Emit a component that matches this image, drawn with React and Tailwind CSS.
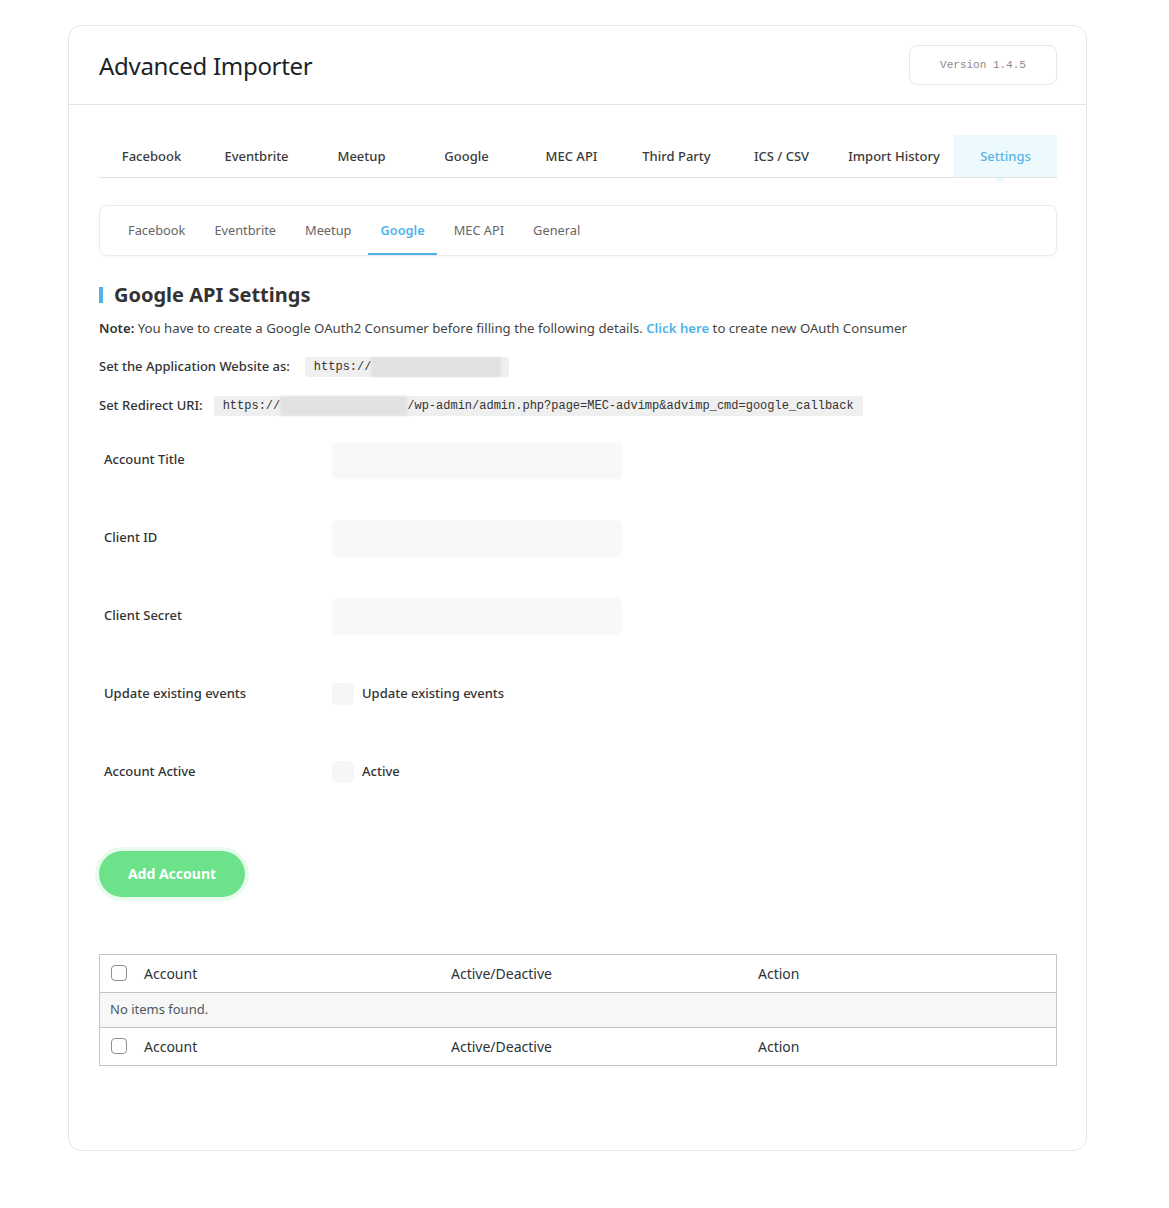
import { useState } from 'react';

const mainTabs = [
  { label: 'Facebook', w: 'w-[105px]' },
  { label: 'Eventbrite', w: 'w-[105px]' },
  { label: 'Meetup', w: 'w-[105px]' },
  { label: 'Google', w: 'w-[105px]' },
  { label: 'MEC API', w: 'w-[105px]' },
  { label: 'Third Party', w: 'w-[105px]' },
  { label: 'ICS / CSV', w: 'w-[105px]' },
  { label: 'Import History', w: 'w-[120px]' },
];

const subTabs = ['Facebook', 'Eventbrite', 'Meetup', 'Google', 'MEC API', 'General'];

const fields = ['Account Title', 'Client ID', 'Client Secret'];

const TableRow = () => (
  <div className="grid grid-cols-[35px_307px_307px_1fr] items-center h-[37px] text-[14px] text-[#2c3338]">
    <div className="flex pl-[11px]">
      <span className="block w-4 h-4 rounded-[4px] border border-[#8c8f94] bg-white" />
    </div>
    <div className="pl-[9px]">Account</div>
    <div className="pl-[9px]">Active/Deactive</div>
    <div className="pl-[9px]">Action</div>
  </div>
);

const App = () => {
  const [subTab, setSubTab] = useState('Google');
  const [update, setUpdate] = useState(false);
  const [active, setActive] = useState(false);

  return (
    <div className="min-h-[1208px] bg-white pt-[25px] px-[68px] font-['Noto_Sans','Open_Sans',sans-serif] text-[#333]">
      <div className="w-[1019px] border border-[#e6e6e6] rounded-[14px] bg-white pb-[84px]">
        {/* Header */}
        <div className="flex items-center justify-between h-[79px] pl-[30px] pr-[29px] border-b border-[#e3e3e3]">
          <h1 className="text-[24px] text-[#1d2327] font-normal leading-none tracking-[-0.3px] pt-[2px]">Advanced Importer</h1>
          <div className="flex items-center justify-center w-[148px] h-[40px] border border-[#e8e8e8] rounded-[8px] font-['Liberation_Mono',monospace] text-[11px] text-[#8a8a8a]">
            Version 1.4.5
          </div>
        </div>

        <div className="pl-[30px] pr-[29px] pt-[30px]">
          {/* Main tabs */}
          <div className="flex border-b border-[#e4e4e4] h-[43px]">
            {mainTabs.map((t) => (
              <div key={t.label} className={`${t.w} flex items-center justify-center pt-[2px] text-[13px] font-medium text-[#3b3b3b]`}>
                {t.label}
              </div>
            ))}
            <div className="relative w-[103px] flex items-center justify-center pt-[2px] bg-[#ecf9fd] text-[13px] font-medium text-[#58b5e4]">
              Settings
              <span className="absolute left-[40px] -bottom-[7px] w-0 h-0 border-l-[6px] border-r-[6px] border-t-[6px] border-l-transparent border-r-transparent border-t-[#ecf9fd]" />
            </div>
          </div>

          {/* Sub tabs */}
          <div className="mt-[27px] flex items-stretch gap-[5px] h-[51px] pl-[16px] border border-[#ebebeb] rounded-[8px] shadow-[0_1px_3px_rgba(0,0,0,0.04)]">
            {subTabs.map((t) => (
              <button
                key={t}
                onClick={() => setSubTab(t)}
                className={
                  t === subTab
                    ? 'px-3 text-[12.8px] font-semibold text-[#4fb3e8] border-b-2 border-[#4fb3e8] pt-[2px]'
                    : 'px-3 text-[12.8px] text-[#666] border-b-2 border-transparent pt-[2px]'
                }
              >
                {t}
              </button>
            ))}
          </div>

          {/* Heading */}
          <h2 className="mt-[26px] flex items-center gap-[11px] text-[20px] font-bold text-[#333] leading-[26px]">
            <span className="block w-[4px] h-[16px] bg-[#4fb3e8]" />
            Google API Settings
          </h2>

          <p className="mt-[11px] text-[13.2px] text-[#444]">
            <span className="font-semibold text-[#333]">Note:</span> You have to create a Google OAuth2 Consumer before filling the following details.{' '}
            <span className="font-semibold text-[#4fb3e8]">Click here</span> to create new OAuth Consumer
          </p>

          <div className="mt-[18px] flex items-center gap-[15px] text-[13px] font-medium text-[#333]">
            <span>Set the Application Website as:</span>
            <span className="flex items-center h-[20px] bg-[#efefef] rounded-[3px] pl-[9px] pr-[8px] font-['Liberation_Mono',monospace] text-[12px] font-normal text-[#333]">
              https://
              <span className="block w-[130px] h-[20px] bg-[#e2e2e2] blur-[1px]" />
            </span>
          </div>

          <div className="mt-[19px] flex items-center gap-[11px] text-[13px] font-medium text-[#333]">
            <span>Set Redirect URI:</span>
            <span className="flex items-center h-[20px] bg-[#efefef] pl-[9px] pr-[9px] font-['Liberation_Mono',monospace] text-[12px] font-normal text-[#333]">
              https://
              <span className="block w-[127px] h-[20px] bg-[#e2e2e2] blur-[1px]" />
              /wp-admin/admin.php?page=MEC-advimp&amp;advimp_cmd=google_callback
            </span>
          </div>

          {/* Form */}
          <div className="mt-[26px] pl-[5px] flex flex-col gap-[42px]">
            {fields.map((f) => (
              <div key={f} className="flex items-center h-[36px]">
                <label className="w-[228px] text-[13px] font-medium text-[#333]">{f}</label>
                <input
                  type="text"
                  className="w-[290px] h-[36px] rounded-[5px] bg-[#f7f8f9] outline-none shadow-[0_1px_2px_rgba(0,0,0,0.03)]"
                />
              </div>
            ))}
            <div className="flex items-center h-[36px]">
              <label className="w-[228px] text-[13px] font-medium text-[#333]">Update existing events</label>
              <button onClick={() => setUpdate(!update)} className="flex items-center gap-[8px] text-[13px] font-medium text-[#333]">
                <span className={`block w-[22px] h-[22px] rounded-[5px] ${update ? 'bg-[#4fb3e8]' : 'bg-[#f5f6f7]'}`} />
                Update existing events
              </button>
            </div>
            <div className="flex items-center h-[36px]">
              <label className="w-[228px] text-[13px] font-medium text-[#333]">Account Active</label>
              <button onClick={() => setActive(!active)} className="flex items-center gap-[8px] text-[13px] font-medium text-[#333]">
                <span className={`block w-[22px] h-[22px] rounded-[5px] ${active ? 'bg-[#4fb3e8]' : 'bg-[#f5f6f7]'}`} />
                Active
              </button>
            </div>
          </div>

          <button className="mt-[61px] w-[146px] h-[46px] rounded-full bg-[#6ce38a] text-white text-[14px] font-bold shadow-[0_0_0_4px_rgba(108,227,138,0.15)]">
            Add Account
          </button>

          {/* Table */}
          <div className="mt-[57px] border border-[#c3c4c7]">
            <TableRow />
            <div className="h-[36px] flex items-center pl-[10px] bg-[#f6f7f7] border-y border-[#c3c4c7] text-[13px] text-[#50575e]">
              No items found.
            </div>
            <TableRow />
          </div>
        </div>
      </div>
    </div>
  );
};

export default App;
